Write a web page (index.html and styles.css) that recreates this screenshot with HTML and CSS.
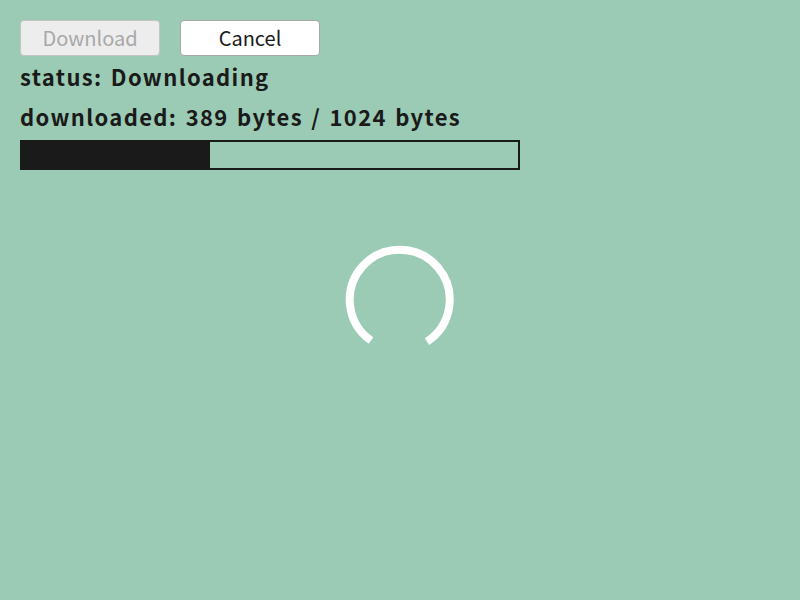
FILE: index.html
```html
<!DOCTYPE html>
<html>
<head>
<meta charset="utf-8">
<link rel="stylesheet" href="styles.css">
</head>
<body>
<div class="app">
  <div class="buttons">
    <button class="btn" disabled>Download</button>
    <button class="btn">Cancel</button>
  </div>
  <div class="line">status: Downloading</div>
  <div class="line">downloaded: 389 bytes / 1024 bytes</div>
  <div class="progress"><div class="fill" style="width: 37.99%"></div></div>
  <div class="spinner-wrap">
    <svg class="spinner" width="116" height="116" viewBox="0 0 116 116">
      <path d="M 29.0 101.6 A 50 50 0 1 1 85.0 102.6" fill="none" stroke="#ffffff" stroke-width="8"/>
    </svg>
  </div>
</div>
</body>
</html>
```
FILE: styles.css
```css
html, body {
  margin: 0;
  padding: 0;
  background: #9bcbb4;
}
body {
  width: 800px;
  height: 600px;
  font-family: "Noto Sans CJK JP", "Noto Sans", sans-serif;
  color: #1a1a1a;
}
.app {
  padding: 20px;
  display: flex;
  flex-direction: column;
}
.buttons {
  display: flex;
  gap: 20px;
}
.btn {
  width: 140px;
  height: 36px;
  box-sizing: border-box;
  background: #ffffff;
  border: 1px solid #a8a8a8;
  border-radius: 4px;
  font-family: "Noto Sans CJK JP", "Noto Sans", sans-serif;
  font-size: 20px;
  color: #1a1a1a;
  padding: 0;
  line-height: 1;
}
.btn:disabled {
  background: #ededed;
  color: #a8a8a8;
  border-color: #c4c4c4;
}
.line {
  font-size: 22px;
  font-weight: bold;
  line-height: 40px;
  letter-spacing: 1.35px;
  word-spacing: 2px;
}
.progress {
  width: 500px;
  height: 30px;
  box-sizing: border-box;
  border: 2px solid #1a1a1a;
  margin-top: 4px;
}
.fill {
  height: 100%;
  background: #1a1a1a;
}
.spinner-wrap {
  display: flex;
  justify-content: center;
  margin-top: 69px;
}
.spinner {
  display: block;
}
```
